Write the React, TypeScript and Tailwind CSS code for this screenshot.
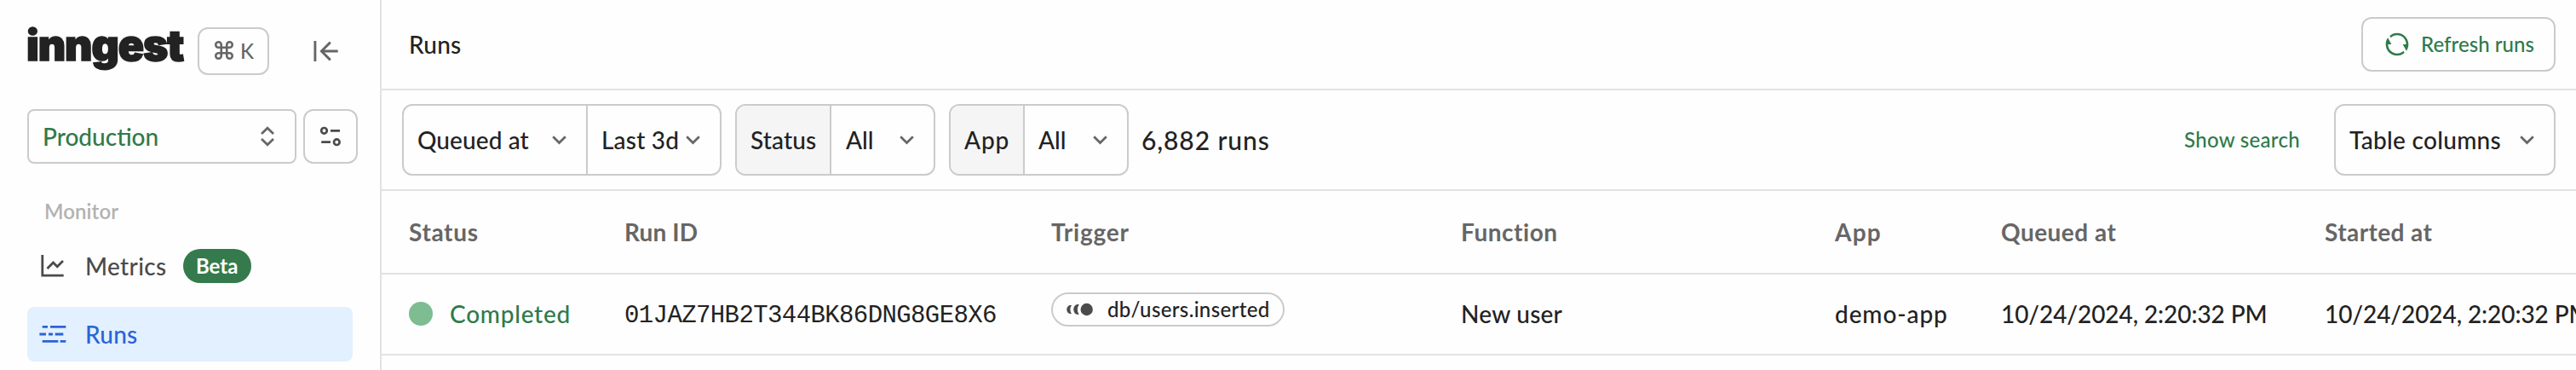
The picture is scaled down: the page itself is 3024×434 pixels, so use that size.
import type { ReactNode } from "react";
import { Command } from "lucide-react";
import { RiRefreshLine } from "react-icons/ri";

function ChevronDown() {
  return (
    <svg width="17" height="11" viewBox="0 0 17 11" fill="none" stroke="#666" strokeWidth="2.7" className="shrink-0">
      <path d="M1.2 1.2 8.5 8.5 15.8 1.2" />
    </svg>
  );
}

function UpDownIcon() {
  return (
    <svg width="16" height="24" viewBox="0 0 16 24" fill="none" stroke="#666" strokeWidth="2.7">
      <path d="M1 9 8 2.2 15 9M1 15 8 21.8 15 15" />
    </svg>
  );
}

function CollapseIcon() {
  return (
    <svg width="29" height="24" viewBox="0 0 29 24" fill="none" stroke="#666" strokeWidth="2.9">
      <path d="M1.9 0V24M28.7 12H9M19.8 1.6 9.4 12 19.8 22.4" />
    </svg>
  );
}

function ToggleIcon() {
  return (
    <svg width="24" height="24" viewBox="0 0 24 24" fill="none" stroke="#4b4b4b" strokeWidth="2.7">
      <circle cx="4.5" cy="5.3" r="3.3" />
      <path d="M12 5.3H23M1.2 18.7H12" />
      <circle cx="19.3" cy="18.7" r="3.3" />
    </svg>
  );
}

function MetricsIcon() {
  return (
    <svg width="32" height="28" viewBox="0 0 32 28" fill="none" stroke="#4b4b4b" strokeWidth="2.8">
      <path d="M3.8 1V25.2H28.7" />
      <path d="M9.5 17.1 16.5 10 21.2 14.7 28 7.9" />
    </svg>
  );
}

function RunsIcon() {
  return (
    <svg width="32" height="22" viewBox="0 0 32 22" stroke="#2c63d6" strokeWidth="2.8">
      <path d="M3.7 2.3H10M13 2.3H31.3M.4 11H8M11 11H16M18.7 11H28.3M3.7 19.4H22.3M24.7 19.4H31.3" />
    </svg>
  );
}

function EventIcon() {
  return (
    <svg width="32" height="16" viewBox="0 0 32 16" fill="#4b4b4b">
      <circle cx="23.7" cy="8" r="7.2" />
      <path d="M14.7 2.2A10.5 10.5 0 0 0 14.7 13.8C11 14.6 8.3 11.8 8.3 8S11 1.4 14.7 2.2Z" />
      <path d="M6 3A9 9 0 0 0 6 13C2.6 13.4.3 11.2.3 8S2.6 2.6 6 3Z" />
    </svg>
  );
}

function Segment({ children, className }: { children: ReactNode; className: string }) {
  return <div className={`flex h-full items-center justify-between ${className}`}>{children}</div>;
}

const box = "flex h-[84px] overflow-hidden rounded-xl border-2 border-[#cbcbcb]";
const label = "leading-none whitespace-nowrap";
const columns = "grid grid-cols-[253px_501px_481px_439px_195px_380px_400px] pl-8";

export default function App() {
  return (
    <div className="flex h-[434px] w-[3024px] overflow-hidden bg-[#fefefe] font-['Lato',sans-serif] text-[28px] font-medium text-[#222]">
      <aside className="flex h-full w-[448px] shrink-0 flex-col border-r-2 border-[#e2e2e2] pl-8">
        <div className="flex items-center pt-8">
          <div className="-ml-px h-14 w-[201px] font-['Inter',sans-serif] text-[50px] leading-[42px] font-black tracking-[-1.1px] [-webkit-text-stroke:1.6px_#222]">
            inngest
          </div>
          <div className="flex h-14 w-[84px] items-center justify-between rounded-xl border-2 border-[#cbcbcb] pr-4 pl-4 text-[#666]">
            <Command size={26} strokeWidth={2.4} className="mb-0.5 shrink-0" />
            <span className="text-2xl leading-none">K</span>
          </div>
          <div className="ml-[52px]">
            <CollapseIcon />
          </div>
        </div>

        <div className="mt-10 flex gap-2">
          <div className="flex h-16 w-[316px] items-center justify-between rounded-lg border-2 border-[#cbcbcb] pr-6 pl-4 text-[#2f7a4a]">
            <span className={label}>Production</span>
            <UpDownIcon />
          </div>
          <div className="flex size-16 items-center justify-center rounded-xl border-2 border-[#cbcbcb]">
            <ToggleIcon />
          </div>
        </div>

        <div className="mt-[42px] pl-5 text-2xl leading-7 font-semibold tracking-[0.1px] text-[#b2b2b2]">Monitor</div>

        <div className="mt-[18px] flex h-16 items-center pl-3.5 text-[#4b4b4b]">
          <MetricsIcon />
          <span className={`ml-[22px] tracking-[0.35px] ${label}`}>Metrics</span>
          <span className="ml-[19px] flex h-10 w-20 items-center justify-center rounded-full bg-[#357a4c] text-2xl leading-none font-bold text-white">
            Beta
          </span>
        </div>

        <div className="mt-4 flex h-16 w-[382px] items-center rounded-lg bg-[#e2f0ff] pl-3.5 text-[#2c63d6]">
          <RunsIcon />
          <span className={`ml-[22px] tracking-[0.24px] ${label}`}>Runs</span>
        </div>
      </aside>

      <main className="flex min-w-0 grow flex-col overflow-hidden">
        <header className="flex h-[106px] shrink-0 items-center justify-between border-b-2 border-[#e2e2e2] pr-6 pl-8">
          <h1 className={`tracking-[0.24px] ${label}`}>Runs</h1>
          <button className="flex h-16 w-[228px] items-center rounded-xl border-2 border-[#cbcbcb] pl-6 text-2xl text-[#2f7a4a]">
            <RiRefreshLine size={32} className="shrink-0" />
            <span className={`ml-3 tracking-[0.05px] ${label}`}>Refresh runs</span>
          </button>
        </header>

        <div className="flex h-[118px] shrink-0 items-center gap-4 border-b-2 border-[#e2e2e2] pr-6 pl-6">
          <div className={`w-[375px] ${box}`}>
            <Segment className="w-[216px] border-r-2 border-[#cbcbcb] pr-[23px] pl-4">
              <span className={`tracking-[0.09px] ${label}`}>Queued at</span>
              <ChevronDown />
            </Segment>
            <Segment className="grow pr-[23px] pl-4">
              <span className={`tracking-[0.19px] ${label}`}>Last 3d</span>
              <ChevronDown />
            </Segment>
          </div>
          <div className={`w-[235px] ${box}`}>
            <Segment className="w-[111px] border-r-2 border-[#cbcbcb] bg-[#f5f5f5] pl-4">
              <span className={`tracking-[0.15px] ${label}`}>Status</span>
            </Segment>
            <Segment className="grow pr-[23px] pl-[17px]">
              <span className={label}>All</span>
              <ChevronDown />
            </Segment>
          </div>
          <div className={`w-[211px] ${box}`}>
            <Segment className="w-[87px] border-r-2 border-[#cbcbcb] bg-[#f5f5f5] pl-4">
              <span className={`tracking-[0.87px] ${label}`}>App</span>
            </Segment>
            <Segment className="grow pr-[23px] pl-4">
              <span className={label}>All</span>
              <ChevronDown />
            </Segment>
          </div>
          <span className="-ml-px text-[30px] leading-none tracking-[0.9px] whitespace-nowrap">6,882 runs</span>
          <a className={`mr-6 ml-auto text-2xl tracking-[0.3px] text-[#2f7a4a] ${label}`}>Show search</a>
          <div className={`w-[260px] ${box}`}>
            <Segment className="grow pr-[23px] pl-4">
              <span className={`tracking-[0.3px] ${label}`}>Table columns</span>
              <ChevronDown />
            </Segment>
          </div>
        </div>

        <div className={`${columns} h-[98px] shrink-0 items-center border-b-2 border-[#e2e2e2] font-bold text-[#666]`}>
          <span className={`tracking-[0.65px] ${label}`}>Status</span>
          <span className={`tracking-[0.1px] ${label}`}>Run ID</span>
          <span className={`tracking-[0.79px] ${label}`}>Trigger</span>
          <span className={`tracking-[0.53px] ${label}`}>Function</span>
          <span className={`tracking-[1.26px] ${label}`}>App</span>
          <span className={`tracking-[0.47px] ${label}`}>Queued at</span>
          <span className={`tracking-[0.42px] ${label}`}>Started at</span>
        </div>

        <div className={`${columns} h-[95px] shrink-0 items-center border-b-2 border-[#e2e2e2] pb-px`}>
          <div className="flex items-center gap-5 text-[#2f7a4a]">
            <span className="size-7 rounded-full bg-[#7ebc92]" />
            <span className={`tracking-[0.75px] ${label}`}>Completed</span>
          </div>
          <span className="pt-1 font-['Liberation_Mono',monospace] text-[29px] leading-none font-normal tracking-[-0.6px]">
            01JAZ7HB2T344BK86DNG8GE8X6
          </span>
          <div className="mb-2.5 flex h-10 w-[274px] items-center rounded-full border-2 border-[#cbcbcb] pl-4">
            <EventIcon />
            <span className={`ml-4 text-2xl tracking-[0.36px] ${label}`}>db/users.inserted</span>
          </div>
          <span className={`tracking-[0.24px] ${label}`}>New user</span>
          <span className={`tracking-[0.9px] ${label}`}>demo-app</span>
          <span className={`tracking-[-0.08px] ${label}`}>10/24/2024, 2:20:32 PM</span>
          <span className={`tracking-[-0.08px] ${label}`}>10/24/2024, 2:20:32 PM</span>
        </div>
      </main>
    </div>
  );
}
